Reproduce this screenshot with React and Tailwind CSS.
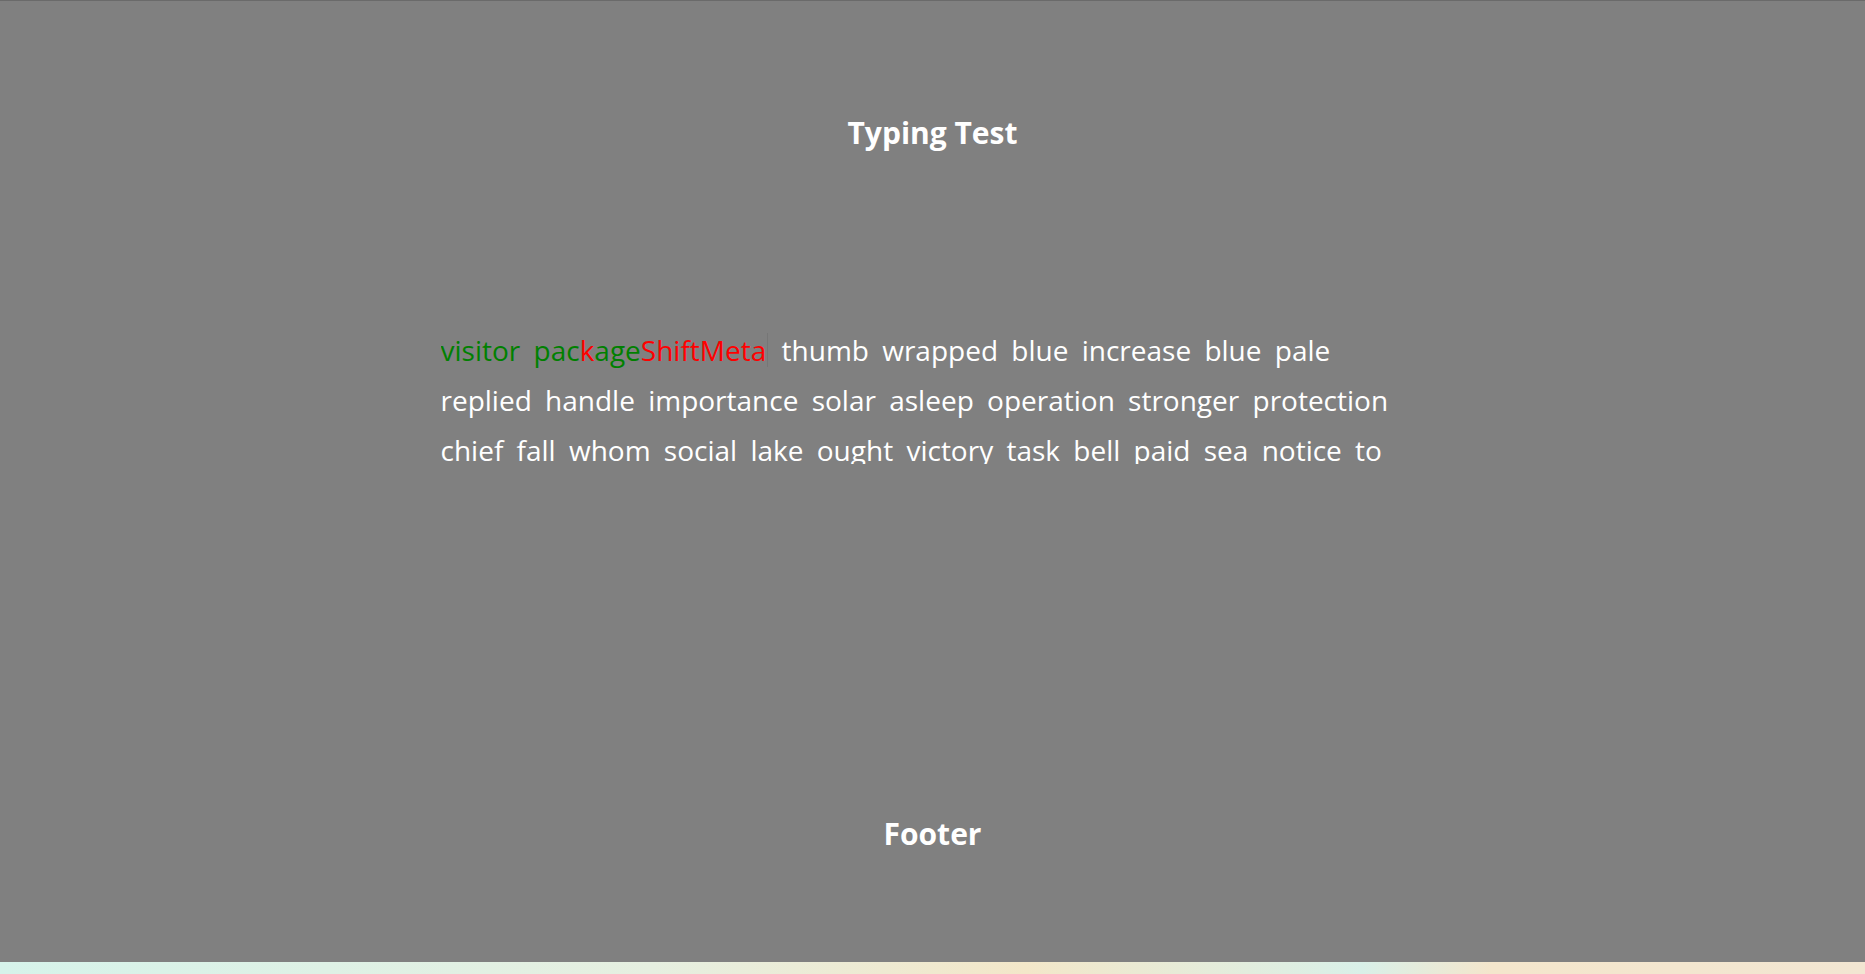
export default function App() {
  const rest =
    'thumb wrapped blue increase blue pale replied handle importance solar asleep operation stronger protection chief fall whom social lake ought victory task bell paid sea notice to the open';

  return (
    <div className="flex h-[974px] w-full flex-col overflow-hidden bg-[#808080] font-['Open_Sans',sans-serif] text-white">
      <div className="h-px bg-[#6a6a6a]" />
      <div className="flex flex-1 flex-col">
        <header className="pt-[110px] text-center">
          <h1 className="text-[30px] font-bold leading-[44px]">Typing Test</h1>
        </header>

        {/* word stream, clipped to three lines */}
        <main className="mx-auto mt-[170px] w-[984px]">
          <div className="h-[139px] overflow-hidden text-[28px] leading-[50px] [word-spacing:6px]">
            <span className="text-[#008000]">visitor </span>
            <span className="text-[#008000]">pac</span>
            <span className="text-[#ff0000]">k</span>
            <span className="text-[#008000]">age</span>
            <span className="text-[#ff0000]">ShiftMeta</span>
            <span className="ml-px inline-block h-[34px] w-px translate-y-[6px] bg-[#767676]" />
            <span> {rest}</span>
          </div>
        </main>

        <footer className="mt-auto pb-[106px] text-center">
          <p className="text-[30px] font-bold leading-[44px]">Footer</p>
        </footer>
      </div>
      <div className="h-[12px] bg-[linear-gradient(90deg,#d6f3ea_0%,#e6efe0_35%,#f3e7c9_55%,#d9f0e8_73%,#f4e6cc_80%,#f2e6d2_100%)]" />
    </div>
  );
}
